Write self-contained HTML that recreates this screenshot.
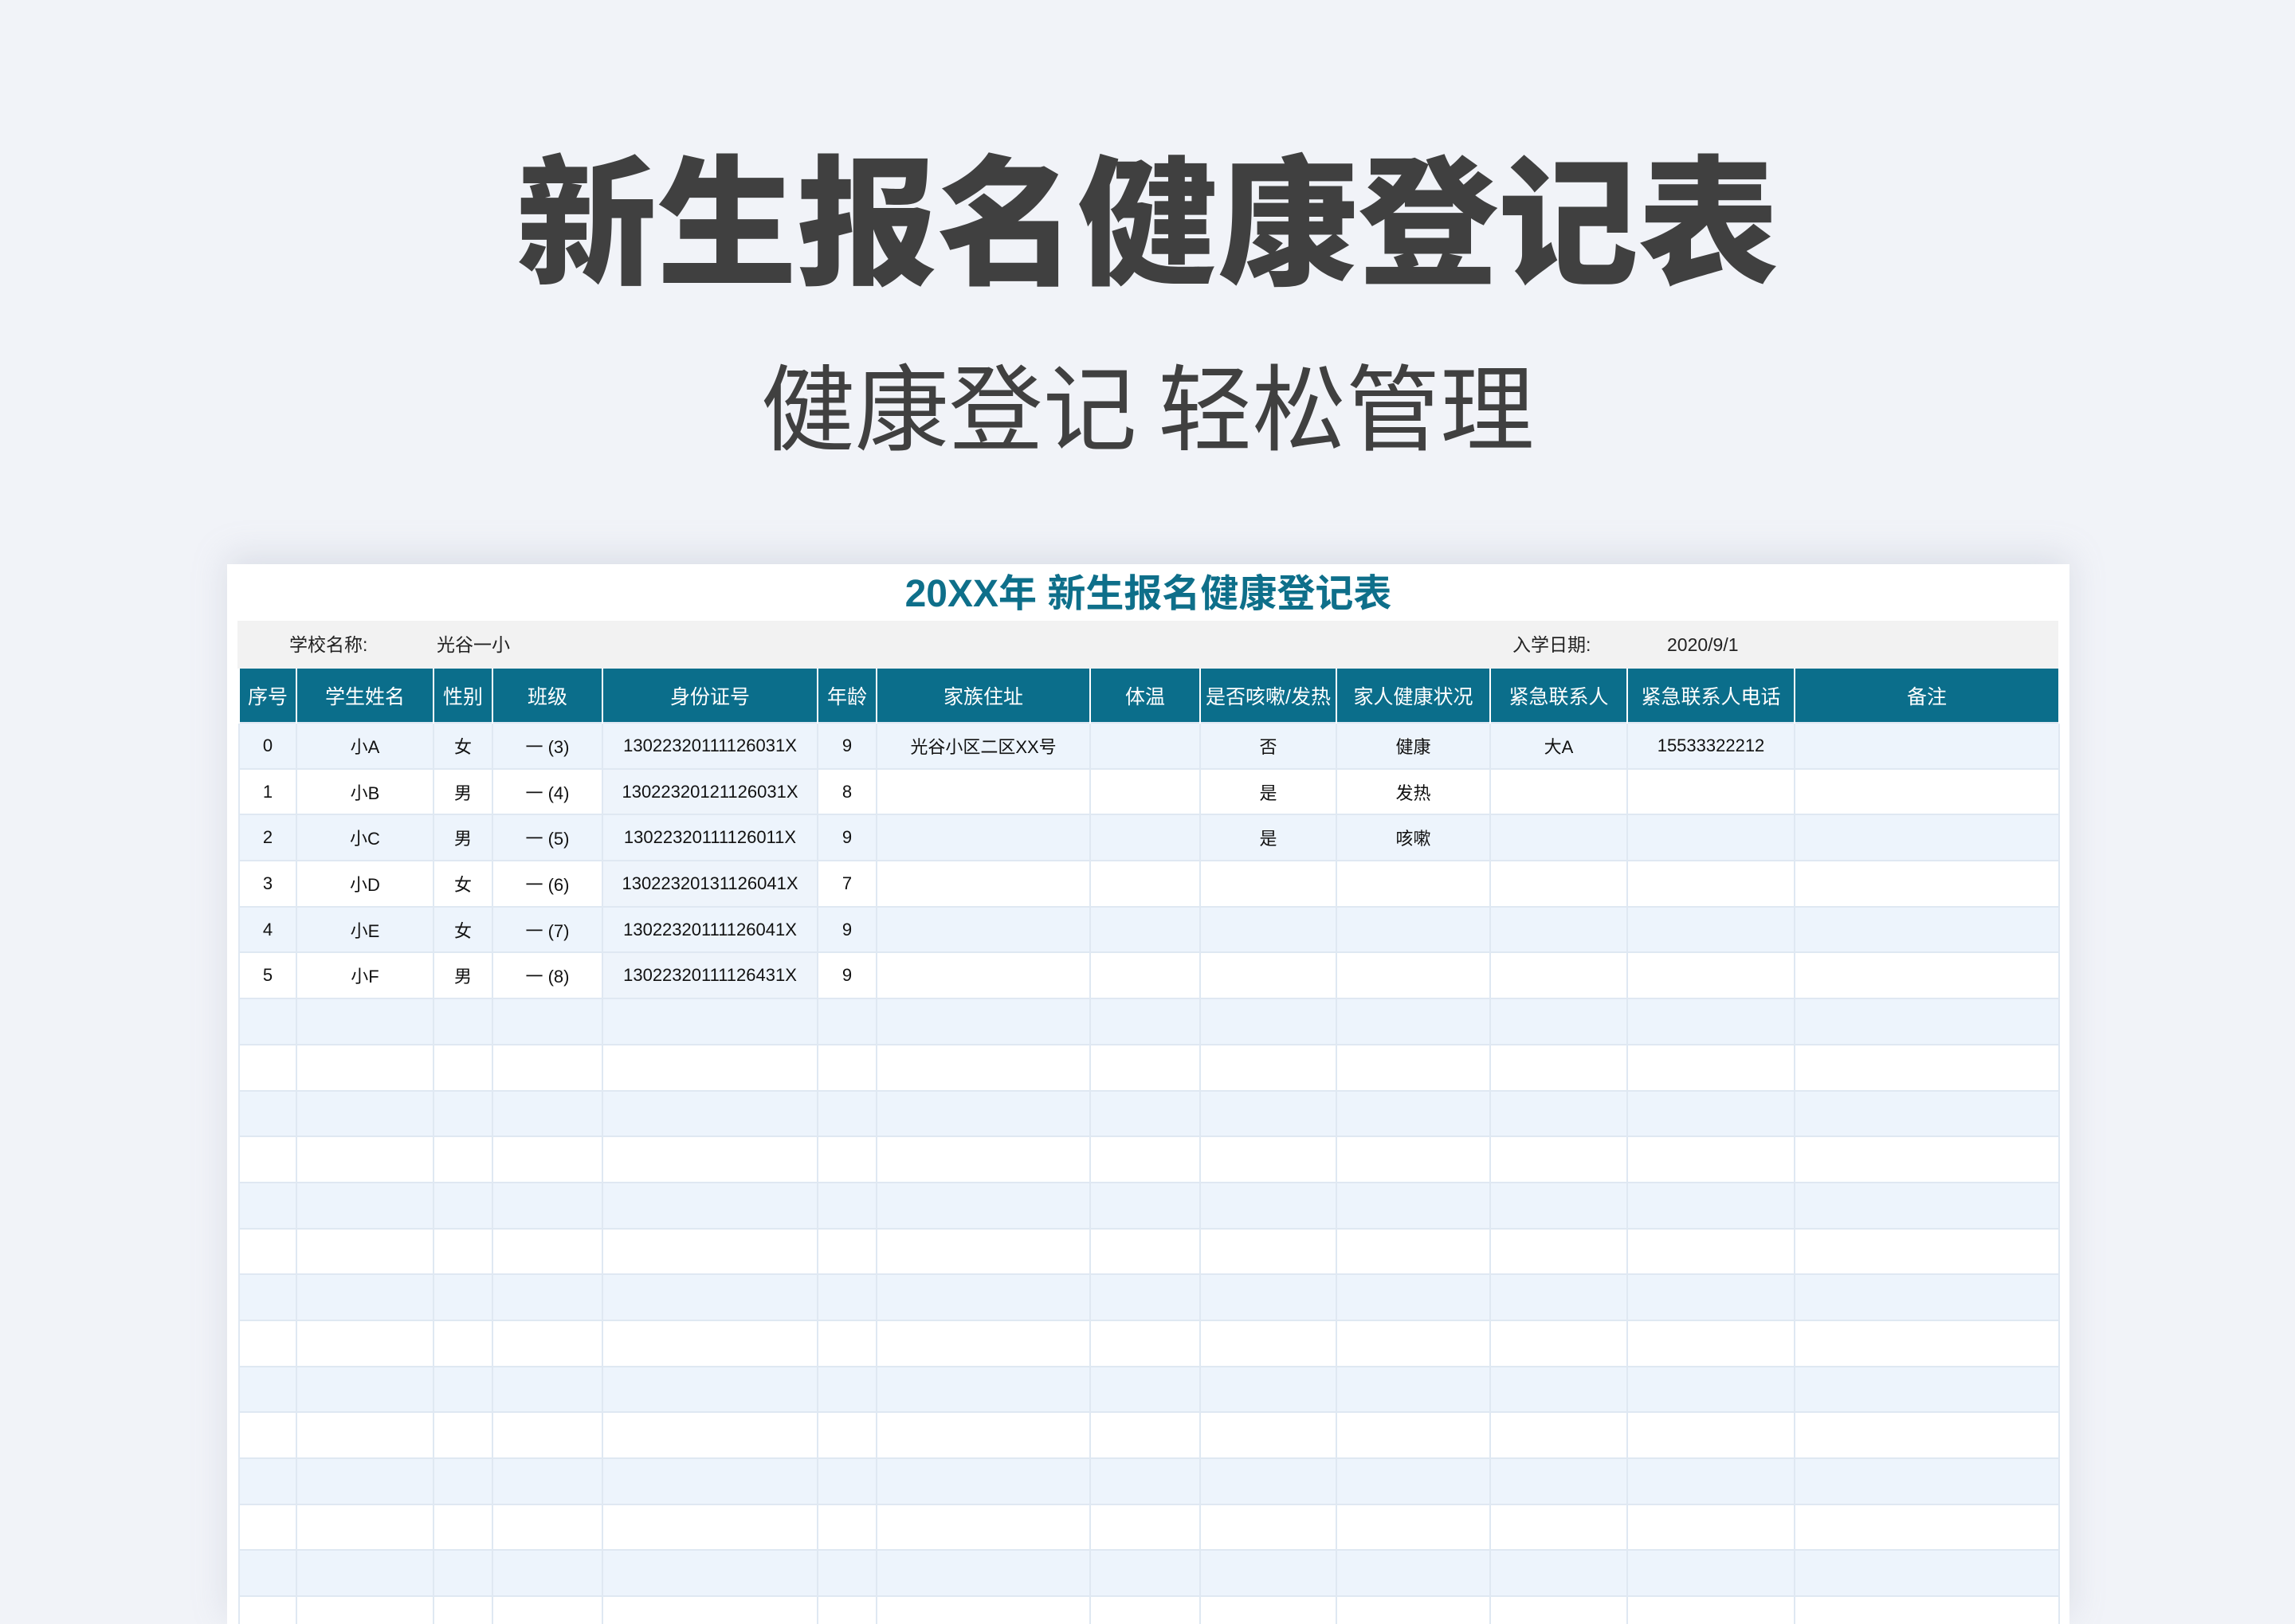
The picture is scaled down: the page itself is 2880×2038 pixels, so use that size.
<!DOCTYPE html>
<html><head><meta charset="utf-8">
<style>
*{margin:0;padding:0;box-sizing:border-box}
html,body{width:2880px;height:2038px;overflow:hidden;background:#f1f3f8;font-family:"Liberation Sans","Noto Sans CJK SC",sans-serif}
.h1{position:absolute;left:0;width:2880px;top:152px;text-align:center;font-size:176px;line-height:230px;font-weight:900;color:#404040;font-family:"Noto Sans CJK SC",sans-serif}
.h2{position:absolute;left:0;width:2880px;top:430px;text-align:center;font-size:118px;line-height:150px;font-weight:400;color:#404040;font-family:"Noto Sans CJK SC",sans-serif}
.card{position:absolute;left:285px;top:708px;width:2312px;height:1330px;overflow:hidden;background:#fff;box-shadow:0 -10px 40px rgba(150,160,180,0.25)}
.t{position:absolute;left:0;width:100%;top:10px;text-align:center;font-size:48px;line-height:56px;font-weight:700;color:#0e6f8a;font-family:"Liberation Sans","Noto Sans CJK SC",sans-serif}
.info{position:absolute;left:13px;top:71px;width:2285px;height:60px;background:#f2f2f2;font-size:23px;color:#222;font-family:"Liberation Sans","Noto Sans CJK SC",sans-serif}
.info span{position:absolute;top:14px;line-height:32px}
table{position:absolute;left:14px;top:131px;border-collapse:collapse;table-layout:fixed;font-family:"Liberation Sans","Noto Sans CJK SC",sans-serif}
th{background:#0b6e8b;color:#fff;font-weight:400;font-size:25px;height:68px;border-right:2px solid #fff;border-left:2px solid #fff;text-align:center;padding:0}
td{height:57.7px;border:2px solid #dfe8f2;text-align:center;font-size:22px;color:#111;padding:0}
tr.a td{background:#edf4fc}
tr.b td{background:#fff}
tr.b td.id{background:#eef4fb}
</style></head><body>
<div class="h1">新生报名健康登记表</div>
<div class="h2">健康登记 轻松管理</div>
<div class="card">
<div class="t">20XX年 新生报名健康登记表</div>
<div class="info"><span style="left:65px">学校名称:</span><span style="left:250px">光谷一小</span><span style="left:1600px">入学日期:</span><span style="left:1794px">2020/9/1</span></div>
<table>
<colgroup><col style="width:72px"><col style="width:172px"><col style="width:74px"><col style="width:138px"><col style="width:270px"><col style="width:74px"><col style="width:268px"><col style="width:138px"><col style="width:171px"><col style="width:193px"><col style="width:172px"><col style="width:210px"><col style="width:332px"></colgroup>
<tr><th>序号</th><th>学生姓名</th><th>性别</th><th>班级</th><th>身份证号</th><th>年龄</th><th>家族住址</th><th>体温</th><th>是否咳嗽/发热</th><th>家人健康状况</th><th>紧急联系人</th><th>紧急联系人电话</th><th>备注</th></tr>
<tr class="a"><td>0</td><td>小A</td><td>女</td><td>一 (3)</td><td class="id">13022320111126031X</td><td>9</td><td>光谷小区二区XX号</td><td></td><td>否</td><td>健康</td><td>大A</td><td>15533322212</td><td></td></tr>
<tr class="b"><td>1</td><td>小B</td><td>男</td><td>一 (4)</td><td class="id">13022320121126031X</td><td>8</td><td></td><td></td><td>是</td><td>发热</td><td></td><td></td><td></td></tr>
<tr class="a"><td>2</td><td>小C</td><td>男</td><td>一 (5)</td><td class="id">13022320111126011X</td><td>9</td><td></td><td></td><td>是</td><td>咳嗽</td><td></td><td></td><td></td></tr>
<tr class="b"><td>3</td><td>小D</td><td>女</td><td>一 (6)</td><td class="id">13022320131126041X</td><td>7</td><td></td><td></td><td></td><td></td><td></td><td></td><td></td></tr>
<tr class="a"><td>4</td><td>小E</td><td>女</td><td>一 (7)</td><td class="id">13022320111126041X</td><td>9</td><td></td><td></td><td></td><td></td><td></td><td></td><td></td></tr>
<tr class="b"><td>5</td><td>小F</td><td>男</td><td>一 (8)</td><td class="id">13022320111126431X</td><td>9</td><td></td><td></td><td></td><td></td><td></td><td></td><td></td></tr>
<tr class="a"><td></td><td></td><td></td><td></td><td class="id"></td><td></td><td></td><td></td><td></td><td></td><td></td><td></td><td></td></tr>
<tr class="b"><td></td><td></td><td></td><td></td><td></td><td></td><td></td><td></td><td></td><td></td><td></td><td></td><td></td></tr>
<tr class="a"><td></td><td></td><td></td><td></td><td></td><td></td><td></td><td></td><td></td><td></td><td></td><td></td><td></td></tr>
<tr class="b"><td></td><td></td><td></td><td></td><td></td><td></td><td></td><td></td><td></td><td></td><td></td><td></td><td></td></tr>
<tr class="a"><td></td><td></td><td></td><td></td><td></td><td></td><td></td><td></td><td></td><td></td><td></td><td></td><td></td></tr>
<tr class="b"><td></td><td></td><td></td><td></td><td></td><td></td><td></td><td></td><td></td><td></td><td></td><td></td><td></td></tr>
<tr class="a"><td></td><td></td><td></td><td></td><td></td><td></td><td></td><td></td><td></td><td></td><td></td><td></td><td></td></tr>
<tr class="b"><td></td><td></td><td></td><td></td><td></td><td></td><td></td><td></td><td></td><td></td><td></td><td></td><td></td></tr>
<tr class="a"><td></td><td></td><td></td><td></td><td></td><td></td><td></td><td></td><td></td><td></td><td></td><td></td><td></td></tr>
<tr class="b"><td></td><td></td><td></td><td></td><td></td><td></td><td></td><td></td><td></td><td></td><td></td><td></td><td></td></tr>
<tr class="a"><td></td><td></td><td></td><td></td><td></td><td></td><td></td><td></td><td></td><td></td><td></td><td></td><td></td></tr>
<tr class="b"><td></td><td></td><td></td><td></td><td></td><td></td><td></td><td></td><td></td><td></td><td></td><td></td><td></td></tr>
<tr class="a"><td></td><td></td><td></td><td></td><td></td><td></td><td></td><td></td><td></td><td></td><td></td><td></td><td></td></tr>
<tr class="b"><td></td><td></td><td></td><td></td><td></td><td></td><td></td><td></td><td></td><td></td><td></td><td></td><td></td></tr>
</table>
</div>
</body></html>
